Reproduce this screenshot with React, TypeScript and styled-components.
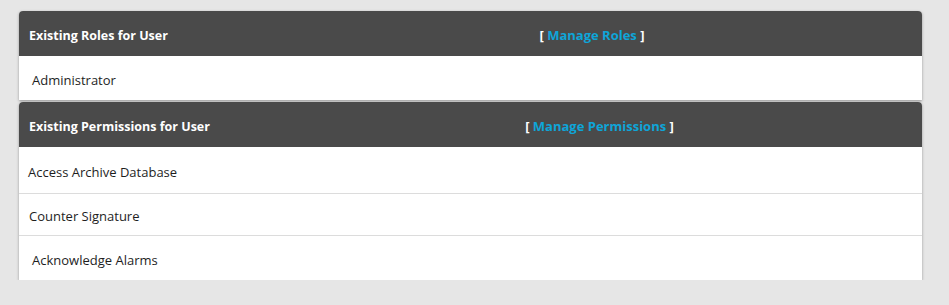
import React from 'react';
import styled, { createGlobalStyle } from 'styled-components';

const GlobalStyle = createGlobalStyle`
    body {
        margin: 0;
        background-color: #e6e6e6;
        font-family: "Open Sans", "Liberation Sans", sans-serif;
    }
`

type Section = {
    title: string;
    link: string;
    titleCol: number;
    items: { label: string; indent: number; height: number }[];
}

const sections: Section[] = [
    {
        title: 'Existing Roles for User',
        link: 'Manage Roles',
        titleCol: 243,
        items: [{ label: 'Administrator', indent: 13, height: 44 }],
    },
    {
        title: 'Existing Permissions for User',
        link: 'Manage Permissions',
        titleCol: 258,
        items: [
            { label: 'Access Archive Database', indent: 9, height: 46 },
            { label: 'Counter Signature', indent: 10, height: 42 },
            { label: 'Acknowledge Alarms', indent: 13, height: 45 },
        ],
    },
];

export default function App() {
    return (
        <>
            <GlobalStyle />
            <Page>
                {sections.map((s) => (
                    <Card key={s.title}>
                        <Header $titleCol={s.titleCol}>
                            <Title>{s.title}</Title>
                            <LinkCell>
                                [ <ManageLink href="#">{s.link}</ManageLink> ]
                            </LinkCell>
                        </Header>
                        {s.items.map((it) => (
                            <Row key={it.label} $indent={it.indent} $h={it.height}>{it.label}</Row>
                        ))}
                    </Card>
                ))}
            </Page>
        </>
    );
}

const Page = styled.div`
    display: flex;
    flex-direction: column;
    gap: 2px;
    padding: 11px 27px 0 19px;
`
const Card = styled.div`
    background-color: #fff;
    border-radius: 4px 4px 0 0;
    box-shadow: 0 1px 3px rgba(0, 0, 0, 0.35);
    overflow: hidden;
`
const Header = styled.div<{ $titleCol: number }>`
    display: grid;
    grid-template-columns: ${(p) => p.$titleCol}px 1fr;
    align-items: center;
    height: 45px;
    padding-top: 3px;
    box-sizing: border-box;
    background-color: #4a4a4a;
    color: #fff;
    font-weight: 700;
    font-size: 12.5px;
`
const Title = styled.div`
    padding-left: 10px;
    white-space: nowrap;
`
const LinkCell = styled.div`
    text-align: center;
    font-size: 13px;
`
const ManageLink = styled.a`
    color: #0ea5d8;
    text-decoration: none;
`
const Row = styled.div<{ $indent: number; $h: number }>`
    display: flex;
    align-items: center;
    box-sizing: border-box;
    height: ${(p) => p.$h}px;
    padding: 3px 0 0 ${(p) => p.$indent}px;
    font-size: 13px;
    color: #1e1e1e;
    & + & {
        border-top: 1px solid #dcdcdc;
    }
`
